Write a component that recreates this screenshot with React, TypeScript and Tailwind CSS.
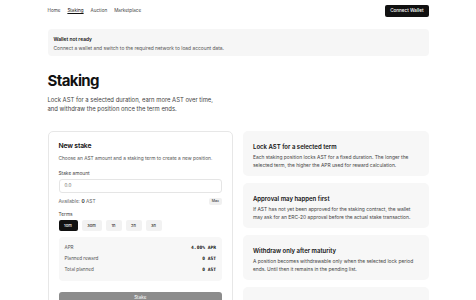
export default function App() {
  const terms = ["10m", "30m", "1h", "2h", "3h"];
  const info = [
    {
      t: "Lock AST for a selected term",
      d: "Each staking position locks AST for a fixed duration. The longer the selected term, the higher the APR used for reward calculation.",
    },
    {
      t: "Approval may happen first",
      d: "If AST has not yet been approved for the staking contract, the wallet may ask for an ERC-20 approval before the actual stake transaction.",
    },
    {
      t: "Withdraw only after maturity",
      d: "A position becomes withdrawable only when the selected lock period ends. Until then it remains in the pending list.",
    },
  ];
  const mono = { fontFamily: "'DejaVu Sans Mono', monospace" };
  return (
    <div className="h-[300px] bg-white text-[#111] overflow-hidden" style={{ fontFamily: "Inter, 'Noto Sans', sans-serif" }}>
      <div className="w-[381px] mx-auto">
        <nav className="h-[21px] flex items-center justify-between pt-[1px]">
          <div className="flex gap-[7px] text-[4.6px] text-[#444]">
            <span>Home</span>
            <span className="text-[#111] underline underline-offset-[1px]">Staking</span>
            <span>Auction</span>
            <span>Marketplace</span>
          </div>
          <button className="h-[12px] px-[5px] rounded-[2px] bg-[#111] text-white text-[4.6px] font-medium">Connect Wallet</button>
        </nav>
        <div className="mt-[8px] h-[27px] rounded-[4px] bg-[#f6f6f6] px-[6px] pt-[7px]">
          <div className="text-[4.9px] font-semibold leading-[6px]">Wallet not ready</div>
          <div className="text-[4.9px] text-[#555] leading-[6px] mt-[3px]">Connect a wallet and switch to the required network to load account data.</div>
        </div>
        <h1 className="mt-[16px] text-[15px] font-bold tracking-[-0.04em] leading-[18px]">Staking</h1>
        <p className="mt-[5px] text-[5.9px] leading-[9px] text-[#444] w-[172px]">
          Lock AST for a selected duration, earn more AST over time, and withdraw the position once the term ends.
        </p>
        <div className="mt-[18px] grid grid-cols-2 gap-[10px] items-start">
          <div className="rounded-[5px] border border-[#e7e7e7] px-[10px] pt-[10px] pb-[10px]">
            <div className="text-[6.8px] font-semibold leading-[8px] tracking-tight">New stake</div>
            <div className="mt-[5px] text-[4.8px] text-[#555] leading-[6px]">Choose an AST amount and a staking term to create a new position.</div>
            <div className="mt-[9px] text-[4.8px] text-[#444] leading-[6px]">Stake amount</div>
            <div className="mt-[3px] h-[14px] rounded-[3px] border border-[#e5e5e5] flex items-center px-[5px] text-[4.6px] text-[#666]">0.0</div>
            <div className="mt-[5px] flex items-center justify-between">
              <span className="text-[4.8px] text-[#666]">Available: <span className="text-[#111] font-semibold">0</span> AST</span>
              <span className="h-[7px] px-[3px] rounded-[2px] bg-[#f0f0f0] text-[3.6px] flex items-center">Max</span>
            </div>
            <div className="mt-[6px] text-[4.8px] text-[#444] leading-[6px]">Terms</div>
            <div className="mt-[3px] flex gap-[4px]">
              {terms.map((t, i) => (
                <span
                  key={t}
                  className={
                    i === 0
                      ? "h-[11px] w-[19px] rounded-[2px] bg-[#111] text-white text-[4px] font-medium flex items-center justify-center"
                      : i === 1
                      ? "h-[11px] w-[20px] rounded-[2px] bg-[#f2f2f2] text-[#333] text-[4px] font-medium flex items-center justify-center"
                      : "h-[11px] w-[16px] rounded-[2px] bg-[#f2f2f2] text-[#333] text-[4px] font-medium flex items-center justify-center"
                  }
                >
                  {t}
                </span>
              ))}
            </div>
            <div className="mt-[6px] rounded-[4px] bg-[#f7f7f7] px-[6px] py-[8px] flex flex-col gap-[5px] text-[4.6px]">
              <div className="flex justify-between leading-[6px]">
                <span className="text-[#555]">APR</span>
                <span className="font-bold" style={mono}>4.00% APR</span>
              </div>
              <div className="flex justify-between leading-[6px]">
                <span className="text-[#555]">Planned reward</span>
                <span className="font-bold" style={mono}>0 AST</span>
              </div>
              <div className="flex justify-between leading-[6px]">
                <span className="text-[#555]">Total planned</span>
                <span className="font-bold" style={mono}>0 AST</span>
              </div>
            </div>
            <button className="mt-[6px] w-full h-[14px] rounded-[3px] bg-[#8c8c8c] text-white text-[4.6px]">Stake</button>
          </div>
          <div className="flex flex-col gap-[7px]">
            {info.map((c) => (
              <div key={c.t} className="h-[45px] rounded-[5px] bg-[#f7f7f7] px-[10px] pt-[12px]">
                <div className="text-[6px] font-semibold leading-[7px]">{c.t}</div>
                <div className="mt-[3px] text-[4.9px] text-[#444] leading-[8px]">{c.d}</div>
              </div>
            ))}
            <div className="h-[45px] rounded-[5px] bg-[#f7f7f7]" />
          </div>
        </div>
      </div>
    </div>
  );
}
